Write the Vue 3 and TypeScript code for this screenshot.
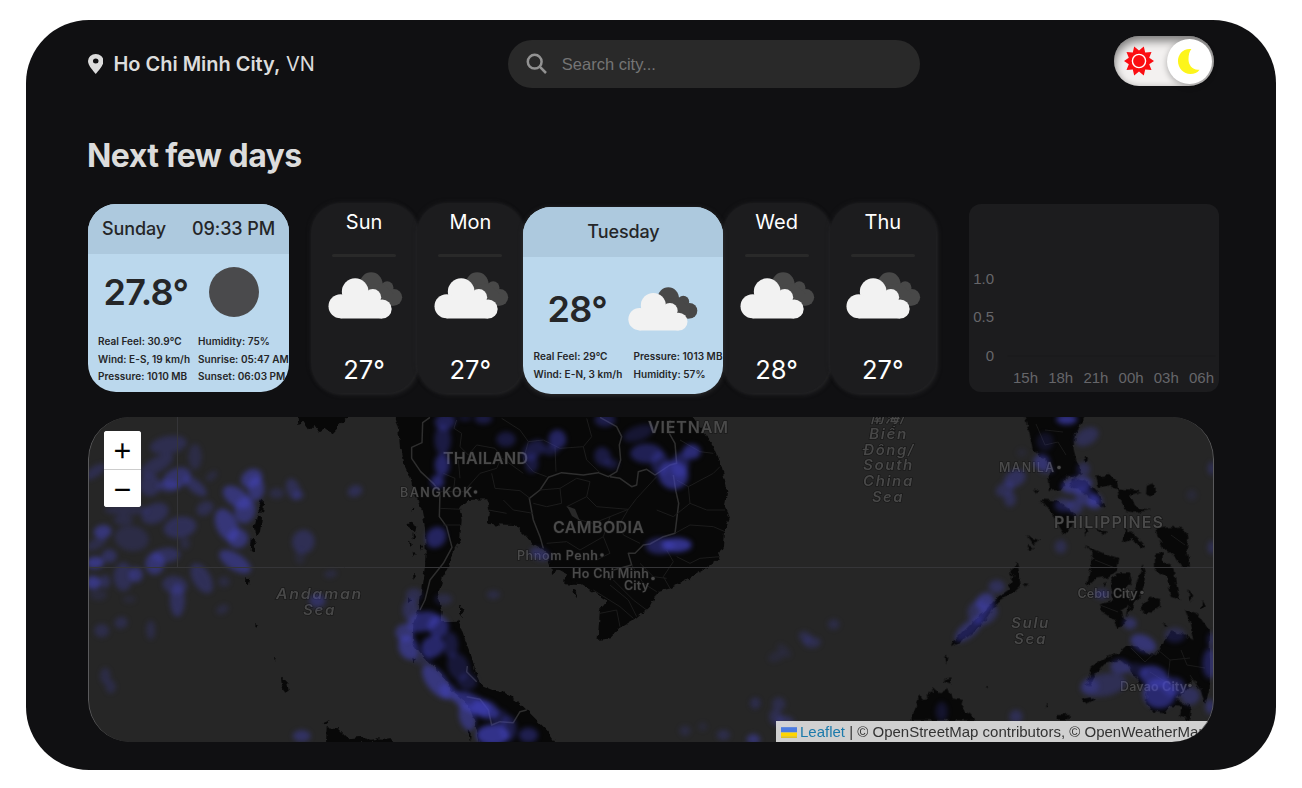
<script setup lang="ts">
interface Forecast {
  day: string
  temp: string
}
interface Blob {
  x: number
  y: number
  rx: number
  ry: number
  a: number
  o: number
}

const before: Forecast[] = [
  { day: 'Sun', temp: '27°' },
  { day: 'Mon', temp: '27°' },
]
const after: Forecast[] = [
  { day: 'Wed', temp: '28°' },
  { day: 'Thu', temp: '27°' },
]
const todayStats = ['Real Feel: 30.9°C', 'Humidity: 75%', 'Wind: E-S, 19 km/h', 'Sunrise: 05:47 AM', 'Pressure: 1010 MB', 'Sunset: 06:03 PM']
const tuesdayStats = ['Real Feel: 29°C', 'Pressure: 1013 MB', 'Wind: E-N, 3 km/h', 'Humidity: 57%']
const hours = ['15h', '18h', '21h', '00h', '03h', '06h']

const toBlobs = (rows: number[][]): Blob[] => rows.map(([x, y, rx, ry, a, o]) => ({ x, y, rx, ry, a, o }))

// Precipitation patches: x, y, radius x, radius y, rotation, strength
const westRain = toBlobs([
  [265, 105, 50, 24, -10, 0.45], [345, 140, 18, 34, 0, 0.35], [230, 165, 50, 20, -30, 0.45],
  [290, 205, 40, 26, -25, 0.75], [345, 228, 38, 16, 40, 0.6], [395, 198, 18, 10, -40, 0.3],
  [210, 225, 28, 30, 0, 0.5], [265, 228, 30, 16, 0, 0.6], [45, 185, 32, 14, -35, 0.45],
  [515, 205, 30, 24, -30, 0.9], [528, 235, 22, 32, 0, 0.85], [470, 262, 42, 24, 35, 0.9],
  [495, 300, 28, 36, 10, 0.8], [440, 345, 28, 46, -25, 0.9], [473, 385, 28, 26, 0, 0.85],
  [465, 455, 48, 22, 32, 0.85], [590, 250, 20, 14, 0, 0.35], [640, 238, 18, 30, -20, 0.5],
  [655, 255, 15, 12, 0, 0.45], [825, 243, 20, 15, -20, 0.5], [375, 295, 24, 18, -30, 0.45],
  [225, 310, 38, 26, -25, 0.5], [300, 352, 44, 28, -10, 0.55], [68, 365, 24, 18, -10, 0.9],
  [50, 400, 30, 14, -30, 0.4], [155, 385, 46, 34, 10, 0.35], [130, 330, 26, 14, 0, 0.35],
  [45, 458, 24, 16, -5, 1], [88, 438, 20, 18, 0, 0.6], [225, 460, 26, 30, 10, 0.8],
  [258, 436, 38, 20, -5, 0.6], [130, 500, 26, 38, 0, 0.5], [168, 494, 18, 20, 0, 0.8],
  [40, 518, 20, 18, 0, 1], [75, 515, 14, 18, 0, 0.5], [285, 525, 34, 24, 10, 0.5],
  [292, 570, 20, 45, 0, 0.6], [365, 505, 24, 44, -30, 0.55], [432, 515, 16, 14, 0, 0.3],
  [427, 598, 18, 12, -25, 0.3], [670, 395, 30, 32, 15, 0.5], [660, 440, 14, 20, 0, 0.2],
  [752, 492, 18, 10, -10, 0.3], [712, 572, 22, 18, 0, 0.65], [123, 638, 18, 16, -20, 0.4],
  [65, 662, 20, 18, 0, 0.4], [212, 660, 12, 26, 0, 0.35], [76, 798, 14, 22, 0, 0.35],
  [92, 830, 14, 18, 0, 0.35], [665, 978, 24, 16, 0, 0.65], [148, 568, 18, 10, 0, 0.2],
  [55, 555, 24, 14, 0, 0.25], [315, 400, 14, 16, 0, 0.3], [140, 300, 60, 14, 0, 0.35],
])
const mainlandRain = toBlobs([
  [195, 35, 28, 22, -10, 0.7], [188, 90, 22, 40, 0, 0.55], [186, 165, 20, 30, 0, 0.85],
  [172, 215, 18, 18, 0, 0.9], [310, 26, 24, 14, 0, 0.55], [255, 24, 18, 8, 0, 0.4],
  [378, 88, 26, 20, 0, 0.5], [460, 120, 34, 22, -40, 0.55], [455, 160, 18, 26, 0, 0.5],
  [532, 88, 24, 26, 0, 0.8], [510, 120, 22, 14, 0, 0.5], [675, 30, 28, 18, 0, 0.6],
  [668, 140, 22, 26, -20, 0.55], [695, 162, 18, 14, 0, 0.45], [775, 70, 42, 20, -20, 0.4],
  [800, 130, 44, 26, 0, 0.7], [840, 160, 24, 32, 0, 0.6], [880, 195, 40, 38, 20, 1],
  [900, 165, 24, 34, 10, 0.7], [935, 125, 24, 20, 0, 1], [168, 382, 30, 26, -50, 0.8],
  [840, 408, 38, 22, 0, 0.75], [890, 405, 40, 19, 0, 1.2], [480, 432, 28, 16, 20, 0.6],
  [102, 555, 22, 18, 0, 0.45], [92, 600, 22, 30, 0, 0.55], [190, 568, 24, 15, 0, 0.35],
  [340, 554, 18, 11, 0, 0.35], [130, 635, 44, 26, -15, 0.9], [175, 650, 28, 30, 0, 0.85],
  [75, 668, 26, 24, 0, 0.8], [85, 712, 26, 34, -20, 0.95], [158, 710, 32, 28, -30, 0.9],
  [128, 745, 28, 18, 0, 0.35], [212, 705, 20, 34, 0, 0.5], [235, 770, 28, 38, -20, 0.45],
  [262, 815, 26, 22, 0, 0.45], [170, 815, 26, 54, -38, 0.95], [205, 845, 26, 20, 30, 0.8],
  [275, 880, 56, 24, 25, 1], [315, 898, 38, 24, 20, 1], [262, 920, 22, 38, -15, 0.85],
  [338, 975, 44, 28, 0, 1.2], [385, 955, 22, 34, 0, 0.6], [445, 975, 26, 20, 0, 0.65],
  [360, 925, 22, 24, 0, 0.5], [915, 962, 15, 14, 0, 0.3], [968, 950, 12, 12, 0, 0.2],
  [1030, 975, 18, 14, 0, 0.4], [1120, 988, 18, 14, 0, 0.8], [1125, 880, 14, 16, 0, 0.3],
])
const centreRain = toBlobs([
  [195, 680, 18, 14, 20, 0.4], [215, 697, 24, 15, 0, 0.45], [281, 643, 16, 14, 0, 0.35],
  [108, 740, 22, 14, -20, 0.2], [132, 722, 24, 12, 45, 0.2], [116, 882, 18, 18, 0, 0.4],
  [108, 922, 18, 22, -20, 0.45], [135, 935, 24, 16, 0, 0.5], [48, 878, 14, 14, 0, 0.15],
])
const eastRain = toBlobs([
  [410, 28, 28, 14, 0, 1.1], [470, 80, 34, 22, -30, 0.5], [345, 95, 22, 24, 0, 0.3],
  [335, 155, 22, 20, 0, 0.8], [275, 128, 14, 12, 0, 0.15], [350, 180, 20, 10, 0, 0.5],
  [255, 205, 30, 22, -25, 0.6], [225, 238, 26, 18, -25, 0.5], [240, 268, 16, 20, 0, 0.5],
  [460, 178, 18, 18, 0, 0.5], [440, 225, 42, 22, -10, 0.9], [470, 262, 34, 22, 30, 0.7],
  [495, 275, 20, 20, 0, 0.75], [435, 290, 20, 20, 0, 0.65], [400, 285, 24, 18, 0, 0.6],
  [392, 410, 16, 18, 0, 0.45], [200, 530, 22, 18, 0, 0.55], [165, 575, 26, 22, -30, 0.9],
  [142, 605, 26, 30, 20, 0.55], [170, 615, 34, 22, -40, 0.6], [115, 660, 44, 20, -40, 0.7],
  [600, 640, 18, 16, 0, 0.65], [640, 700, 36, 22, 25, 0.85], [735, 675, 28, 20, 0, 0.45],
  [570, 770, 26, 20, 0, 0.7], [620, 780, 30, 18, 10, 0.4], [672, 800, 40, 28, 20, 0.95],
  [688, 850, 44, 40, 0, 0.95], [520, 825, 62, 30, -10, 0.5], [480, 828, 24, 20, 0, 0.5],
  [730, 830, 30, 26, 0, 0.7], [780, 858, 26, 24, 0, 0.6], [840, 760, 20, 40, 0, 0.7],
  [845, 690, 12, 20, 0, 0.5], [840, 890, 12, 20, 0, 0.7], [845, 175, 10, 18, 0, 0.5],
  [845, 412, 10, 18, 0, 0.5], [785, 255, 14, 14, 0, 0.2], [258, 920, 18, 18, 0, 0.5],
  [35, 905, 16, 26, 0, 0.35], [515, 552, 20, 12, 0, 0.6],
])
const layers = [
  { id: 'w', t: 'translate(80 410) scale(.33333)', blobs: westRain },
  { id: 'm', t: 'translate(380 410) scale(.33333)', blobs: mainlandRain },
  { id: 'c', t: 'translate(740 410) scale(.33333)', blobs: centreRain },
  { id: 'e', t: 'translate(930 410) scale(.33333)', blobs: eastRain },
]
</script>

<template>
  <svg class="defs" aria-hidden="true">
    <symbol id="clouds" viewBox="84 229 224 141">
      <g class="back-cloud">
        <circle cx="213" cy="264" r="34" />
        <circle cx="261" cy="276" r="19" />
        <circle cx="281" cy="305" r="25" />
        <path d="M200 270L245 262L280 295V330H250L200 300Z" />
      </g>
      <g class="front-cloud">
        <circle cx="165" cy="288" r="40" />
        <circle cx="121" cy="332" r="36" />
        <circle cx="218" cy="305" r="25" />
        <circle cx="246" cy="340" r="28.5" />
        <path d="M121 300H200L246 318V368.5H121Z" />
      </g>
    </symbol>
  </svg>
  <main class="shell">
    <header class="top">
      <div class="place">
        <svg class="pin" viewBox="0 0 14 20" preserveAspectRatio="none"><path fill-rule="evenodd" d="M7 0A7 7 0 0 0 0 7C0 11.6 4.600 16.500 7 20C9.400 16.500 14 11.600 14 7A7 7 0 0 0 7 0ZM7 4.600A2.500 2.500 0 1 1 7 9.600A2.500 2.500 0 0 1 7 4.600Z" /></svg>
        <span><b>Ho Chi Minh City,</b> VN</span>
      </div>
      <label class="search">
        <svg viewBox="0 0 22 22"><circle cx="8.700" cy="8.700" r="6.900" /><path d="M13.700 13.700L20 20" /></svg>
        <input type="text" placeholder="Search city..." />
      </label>
      <div class="toggle">
        <svg class="sun" viewBox="-1 0 32 30">
          <path d="M15 4.500L19.800 .5L21.200 6.400L27.500 5.900L25.200 11.700L30 15L25.200 18.300L27.500 24.100L21.200 23.600L19.800 29.500L15 25.500L10.200 29.500L8.800 23.600L2.500 24.100L4.800 18.300L0 15L4.800 11.700L2.500 5.900L8.800 6.400L10.200 .5Z" fill="#fb0d12" />
          <circle cx="15" cy="15" r="6.600" fill="#fb0d12" stroke="#fff" stroke-width="1.400" />
        </svg>
        <div class="knob">
          <svg viewBox="0 0 24 28"><path d="M15 1C6 0 1 7 1 13.500C1 21 7 27 14 27C18 27 21.500 25.500 23.500 22.500C16 23.500 12 17.500 12 12C12 7 13 3.500 15 1Z" fill="#fdf51b" /></svg>
        </div>
      </div>
    </header>

    <h1>Next few days</h1>

    <section class="row">
      <article class="wide today">
        <div class="head"><span>Sunday</span><span>09:33 PM</span></div>
        <div class="now"><strong>27.8°</strong><i class="moon"></i></div>
        <div class="stats"><span v-for="s in todayStats" :key="s">{{ s }}</span></div>
      </article>

      <div class="days">
        <article v-for="d in before" :key="d.day" class="day">
          <h2>{{ d.day }}</h2><hr />
          <svg><use href="#clouds" /></svg>
          <p>{{ d.temp }}</p>
        </article>
        <article class="wide selected">
          <div class="head"><span>Tuesday</span></div>
          <div class="now"><strong>28°</strong><svg><use href="#clouds" /></svg></div>
          <div class="stats"><span v-for="s in tuesdayStats" :key="s">{{ s }}</span></div>
        </article>
        <article v-for="d in after" :key="d.day" class="day">
          <h2>{{ d.day }}</h2><hr />
          <svg><use href="#clouds" /></svg>
          <p>{{ d.temp }}</p>
        </article>
      </div>

      <svg class="chart" viewBox="0 0 249 188">
        <text x="24.500" y="80" text-anchor="end">1.0</text>
        <text x="24.500" y="118" text-anchor="end">0.5</text>
        <text x="24.500" y="157" text-anchor="end">0</text>
        <path d="M38 152H246" />
        <text v-for="(h, i) in hours" :key="h" :x="56 + i * 35.2" y="179" text-anchor="middle">{{ h }}</text>
      </svg>
    </section>

    <section class="map">
      <svg class="canvas" viewBox="88 417 1126 325">
        <defs>
          <filter id="soft" x="-5%" y="-5%" width="110%" height="110%" color-interpolation-filters="sRGB"><feGaussianBlur stdDeviation="8" /></filter>
          <filter id="coast" x="0" y="0" width="100%" height="100%" color-interpolation-filters="sRGB">
            <feTurbulence type="fractalNoise" baseFrequency=".16" numOctaves="2" seed="4" />
            <feDisplacementMap in="SourceGraphic" scale="6" xChannelSelector="R" yChannelSelector="G" />
          </filter>
        </defs>
        <g class="land" filter="url(#coast)">
          <g transform="translate(80 410) scale(.33333)">
            <path d="M652 10H815L785 38L755 70L735 55L715 66L700 45L685 60L670 38L655 45Z" />
            <path d="M542 265L552 275L550 305L540 310L536 290ZM532 315L546 325L540 365L530 380L524 350ZM516 385L528 400L522 425L512 420ZM499 498L511 503L507 525L498 522Z" />
            <path d="M603 800L622 820L626 842L615 848L605 825ZM525 642L535 648L528 653ZM580 742L588 750L580 752ZM740 952L775 955L805 985L850 980L870 992L930 985L940 1000H738ZM728 940L752 930L740 945Z" />
          </g>
          <g transform="translate(380 410) scale(.33333)">
            <path d="M40 10L55 60L60 110L70 160L90 200L105 250L125 300L135 350L137 420L135 470L125 530L118 590L100 640L98 700L120 730L150 760L180 790L215 840L250 870L272 900L282 930L300 1000H528L500 960L450 910L420 880L370 845L340 842L310 830L290 800L275 740L255 690L235 632L182 634L188 605L172 560L190 500L207 470L217 430L240 390L245 330L238 292L262 270L322 268L327 300L323 342L400 345L430 370L455 398L492 420L510 465L513 495L535 478L558 490L552 520L602 522L640 545L682 572L660 600L653 690L690 685L720 655L770 625L810 590L832 545L872 535L920 510L970 480L1010 450L1032 410L1035 360L1050 320L1035 290L1042 240L1022 160L1002 110L960 50L930 10Z" />
            <path d="M78 345L92 338L112 350L108 370L95 358ZM98 370L108 378L98 390ZM84 395L96 402L88 410ZM98 425L110 430L100 440ZM125 405L132 412L125 425ZM92 290L102 295L95 305ZM100 490L108 498L100 510ZM88 562L96 572L86 580ZM240 588L253 595L247 622L240 610ZM578 538L592 545L586 565ZM575 508L592 515L575 522ZM100 740L110 745L104 762ZM262 955L272 970L270 990ZM-10 985L35 988V1000H-10Z" />
          </g>
          <g transform="translate(930 410) scale(.33333)">
            <path d="M282 10H470L450 45L435 70L430 115L440 155L455 190L440 205L415 195L400 215L385 225L355 210L365 170L335 140L308 120L300 75Z" />
            <path d="M355 195L390 195L410 230L395 235L360 240ZM430 205L470 215L500 245L525 285L515 292L485 265L450 240L420 235ZM495 200L540 195L560 215L565 240L535 225L505 235ZM560 235L610 240L635 245L600 255L615 290L660 300L610 308L585 300L570 265ZM650 225L665 218L680 240L665 262L648 255ZM330 268L380 272L415 292L435 318L425 350L405 375L388 350L370 310L345 290ZM458 135L475 150L462 158ZM308 235L328 243L320 250Z" />
            <path d="M465 350L475 362L468 380ZM500 358L530 365L520 378ZM590 355L625 385L648 410L630 410L605 385L572 398ZM675 355L750 350L775 380L770 430L780 470L755 470L735 440L700 415ZM675 430L700 430L695 450L730 475L738 520L750 570L725 560L710 500L675 480Z" />
            <path d="M465 405L520 430L568 445L560 480L535 500L500 505L470 530L480 480L488 430ZM540 515L560 490L600 490L605 515L585 545L605 580L575 600L585 640L565 655L545 625L515 605L510 580L550 570ZM638 465L648 500L635 550L605 595L590 620L605 560ZM632 590L660 560L690 568L690 590L665 608L635 605Z" />
            <path d="M775 540L790 560L780 575ZM815 570L828 590L815 595ZM765 598L800 610L820 640L840 655V830L825 885L812 840L785 805L770 840L735 865L760 875L785 900L780 930L750 920L755 890L720 888L705 910L670 905L648 880L650 840L620 805L600 775L570 750L520 762L498 790L480 830L468 825L485 770L520 745L565 730L590 705L625 710L650 730L680 735L700 700L720 665L755 670L790 690L780 640Z" />
            <path d="M260 455L268 490L272 525L245 550L205 575L175 620L140 660L100 690L65 712L75 690L125 640L165 600L205 560L235 540L250 500L240 490ZM285 522L300 525L285 532ZM290 375L328 392L308 400ZM292 405L308 412L300 425ZM43 740L52 738L48 760ZM50 808L65 805L60 820L40 815ZM-55 920L-30 855L-20 875L10 835L30 850L55 835L65 865L100 870L95 900L120 912L138 930H-55ZM380 915L420 915L415 928H380ZM455 865L480 858L495 870L475 882ZM348 885L353 890L345 895ZM168 828L178 830L170 834ZM700 640L715 648L705 650ZM530 515L525 528L518 525Z" />
          </g>
        </g>
        <g class="borders" transform="translate(380 410) scale(.33333)">
          <path class="major" d="M150 22L128 38L126 98L95 112V145L122 185L160 220L180 245L178 320L200 350L216 412L190 460L150 510L135 570L120 600" />
          <path class="major" d="M660 22L710 50L725 80L718 105L722 150L710 185L685 200L655 188L610 195L545 188L505 202L480 240L448 265L460 330L480 380L490 415" />
          <path class="major" d="M690 200L720 205L755 230L770 225L775 185L800 178L825 195L870 165L890 160L885 100L868 70L870 30" />
          <path class="major" d="M880 195L888 245L896 280L885 370L850 380L810 402L790 405L765 430L745 430L755 465L700 480L690 510" />
          <path class="major" d="M260 860L300 868L325 900L335 945L360 935L400 938L420 905L440 900M262 768L260 785L290 815" />
          <path d="M230 30L222 55L245 70L240 110L265 135L290 105L345 115L365 140L350 175L300 190L260 235M365 25L420 60L445 95L490 90L540 115L610 110L635 80L620 25M445 95L430 150L460 185L500 200M525 110L528 185M610 110L620 150L660 188M360 140L430 190M190 190L225 205L220 245M180 245H260M240 205L235 150M335 190L345 235L420 242L450 265M370 270L400 300L460 310M325 300L380 310M180 295L245 298M190 345L240 345" />
          <path d="M480 240L540 235L590 205L630 215L620 260L650 290L745 298L770 265L830 200M540 235L545 280L500 290L460 280M620 260L560 290L600 330L640 340L690 320L745 298L720 340L730 375L780 400M690 320L670 380L600 420L560 395L500 400M670 380L690 430L650 450M830 300L880 320L930 280L980 300L1035 300M885 370L930 345L1000 350L1035 365M930 280L925 230L890 210M925 230L1000 190L1020 170M900 90L960 125L1000 130M890 440L930 460L960 445L1020 440M860 420L880 455L850 500L870 535M755 465L790 520L830 545M700 510L760 570L800 600M690 525L745 570L770 620M640 540L720 590L760 625M660 610L710 600L720 650M780 460L820 500L860 505" />
        </g>
        <path class="lake" d="M567 506L575 509L580 521L572 516Z" />
        <g class="borders east"><path d="M1036 424L1045 445L1058 442L1066 455M1045 430L1063 432M1131 648L1145 662L1158 650L1170 660L1168 678M1181 650L1187 665L1205 668M1170 660L1190 658M1150 672L1178 690M1190 675L1200 690M1095 560L1115 568M1100 605L1118 612M1171 535L1185 545" /></g>

        <g class="names countries">
          <text x="443" y="463.500" textLength="85">THAILAND</text>
          <text x="553" y="533" textLength="91">CAMBODIA</text>
          <text x="648" y="433" textLength="80">VIETNAM</text>
          <text x="1054" y="527.500" textLength="109">PHILIPPINES</text>
        </g>
        <g class="names cities">
          <text x="400" y="497" textLength="72">BANGKOK</text><circle cx="475.500" cy="492" r="1.800" />
          <text x="517" y="560" textLength="81">Phnom Penh</text><circle cx="602" cy="555" r="1.800" />
          <text x="572" y="577.500" textLength="77">Ho Chi Minh</text><circle cx="653" cy="578.500" r="1.800" />
          <text x="624" y="590" textLength="25">City</text>
          <text x="999" y="471.500" textLength="55">MANILA</text><circle cx="1059" cy="467.500" r="1.800" />
          <text x="1077.500" y="597.500" textLength="60">Cebu City</text><circle cx="1142" cy="592.500" r="1.800" />
          <text x="1120" y="690.500" textLength="67">Davao City</text><circle cx="1190" cy="685.500" r="1.800" />
        </g>
        <g class="names seas">
          <text x="276" y="599" textLength="87" lengthAdjust="spacingAndGlyphs">Andaman</text><text x="303" y="614.500" textLength="33" lengthAdjust="spacingAndGlyphs">Sea</text>
          <text x="870" y="422.500" textLength="37">南海/</text><text x="869" y="438.500" textLength="39" lengthAdjust="spacingAndGlyphs">Biển</text>
          <text x="863" y="454.500" textLength="52" lengthAdjust="spacingAndGlyphs">Đông/</text><text x="863" y="470" textLength="51" lengthAdjust="spacingAndGlyphs">South</text>
          <text x="863" y="486" textLength="51" lengthAdjust="spacingAndGlyphs">China</text><text x="872" y="501.500" textLength="32" lengthAdjust="spacingAndGlyphs">Sea</text>
          <text x="1011" y="628" textLength="39" lengthAdjust="spacingAndGlyphs">Sulu</text><text x="1014" y="643.500" textLength="33" lengthAdjust="spacingAndGlyphs">Sea</text>
        </g>
        <g v-for="l in layers" :key="l.id" :transform="l.t" class="rain" filter="url(#soft)">
          <ellipse v-for="(b, i) in l.blobs" :key="i" :cx="b.x" :cy="b.y" :rx="b.rx * 1.12" :ry="b.ry * 1.12" :opacity="b.o * 0.58" :transform="`rotate(${b.a} ${b.x} ${b.y})`" />
        </g>
        <path class="seam" d="M88 567.500H1214M177.500 417V567" />
      </svg>
      <div class="zoom"><button>+</button><button>−</button></div>
      <div class="credit"><svg viewBox="0 0 12 8"><path fill="#4C7BE1" d="M0 0h12v4H0z" /><path fill="#FFD500" d="M0 4h12v3H0z" /><path fill="#E0BC00" d="M0 7h12v1H0z" /></svg><a>Leaflet</a> | © OpenStreetMap contributors, © OpenWeatherMap</div>
    </section>
  </main>
</template>

<style>
body { margin: 0; background: #fff; overflow: hidden; }
</style>

<style scoped>
* { box-sizing: border-box; }
.defs { position: absolute; width: 0; height: 0; }
.shell {
  width: 1250px; height: 750px; margin: 20px 0 0 26.400px; padding: 16px 61px 0 61.600px;
  border-radius: 63px; background: #101012; color: #dcdcdc;
  font-family: Inter, "Liberation Sans", sans-serif; overflow: hidden;
}
.top { display: flex; align-items: flex-start; height: 86px; }
.place { flex: none; display: flex; align-items: center; gap: 10px; width: 419.800px; height: 56px; font-size: 20px; letter-spacing: -.03px; white-space: nowrap; }
.place b { font-weight: 600; }
.pin { width: 15.500px; height: 20px; fill: #dcdcdc; margin-top: -1px; }
.search { flex: none; display: flex; align-items: center; gap: 14px; width: 412.500px; height: 48px; margin-top: 4px; padding-left: 18px; border-radius: 24px; background: #292929; }
.search svg { width: 22px; height: 22px; fill: none; stroke: #929292; stroke-width: 2.500; }
.search input { width: 300px; padding: 0; border: 0; outline: 0; background: none; color: #aaa; font: 16.500px/20px "Liberation Sans", Arial, sans-serif; }
.search input::placeholder { color: #757575; opacity: 1; }
.toggle { flex: none; display: flex; align-items: center; justify-content: space-between; width: 100px; height: 50px; margin-left: 193.300px; padding: 0 2px 0 9px; border-radius: 25px; background: #f3f1f0; box-shadow: inset 0 5px 10px rgba(0, 0, 0, .5), inset 0 -2px 4px rgba(0, 0, 0, .05); }
.sun { width: 32px; height: 30px; }
.knob { display: flex; align-items: center; justify-content: center; width: 45px; height: 45px; padding-right: 2px; border-radius: 50%; background: #fff; box-shadow: 0 2px 6px rgba(0, 0, 0, .3); }
.knob svg { width: 23px; height: 27px; }
h1 { height: 82px; margin: 0 0 0 -1px; padding-top: 15px; color: #dcdcdc; font-size: 32px; line-height: 38px; font-weight: 700; letter-spacing: -.56px; }
.row { display: flex; height: 213px; }

.wide { flex: none; width: 200px; border-radius: 28px; overflow: hidden; background: #bbd8ed; color: #252628; }
.head { display: flex; align-items: center; height: 50px; padding-bottom: 1px; background: #adc9de; font-size: 18px; font-weight: 500; letter-spacing: -.1px; white-space: nowrap; }
.wide strong { font-size: 36px; font-weight: 600; letter-spacing: -.7px; }
.stats { display: grid; grid-template-columns: 100px 110px; padding-left: 10px; font-size: 10px; font-weight: 600; line-height: 17.500px; letter-spacing: .04px; white-space: nowrap; }
.now { display: flex; align-items: center; }
.today { width: 201px; height: 188px; }
.today .head { justify-content: space-between; padding: 0 14px 1px; }
.today .now { height: 79px; gap: 20.500px; padding: 0 0 3px 15.500px; }
.moon { width: 50px; height: 50px; border-radius: 50%; background: #4a4a4c; }

.days { flex: none; display: flex; width: 626px; margin-left: 22px; }
.day { flex: none; display: flex; flex-direction: column; align-items: center; width: 106.250px; height: 190px; margin-top: -1px; border-radius: 30px; background: #1c1c1e; box-shadow: 2px 2px 4px rgba(54, 54, 56, .5), -1px -1px 4px rgba(40, 40, 42, .4); color: #fff; }
.day h2 { height: 51px; margin: 0; padding-top: 7px; font-size: 20px; font-weight: 400; line-height: 24px; }
.day hr { width: 64px; height: 3px; margin: 0; border: 0; border-radius: 2px; background: #292929; }
.day svg { width: 75px; height: 47px; margin: 14.500px 0 0 2px; }
.day p { margin: 36.500px 0 0; font-size: 25.500px; font-weight: 400; line-height: 30px; }
.selected { position: relative; height: 187px; margin-top: 3px; box-shadow: 0 1px 5px #303032; }
.selected .head { justify-content: center; }
.selected .now { height: 91px; padding: 13px 0 0 24px; gap: 20.500px; }
.selected .now svg { width: 70px; height: 44px; }
.back-cloud { fill: #484848; }
.front-cloud { fill: #f2f2f2; }

.chart { flex: none; width: 250px; height: 188px; margin-left: 32.500px; border-radius: 12px; background: #1c1c1e; font: 15px "Liberation Sans", Arial, sans-serif; }
.chart text { fill: #66666a; }
.chart path { stroke: #18181b; }

.map { position: relative; width: 1126px; height: 325px; border-radius: 42px; overflow: hidden; background: #262626; }
.map::after { content: ""; position: absolute; inset: 0; border: solid #5a5a5c; border-width: 0 1px; border-radius: 42px; pointer-events: none; }
.canvas { display: block; width: 1126px; height: 325px; }
.land { fill: #080808; }
.borders { fill: none; stroke: #1c1c1c; stroke-width: 3; stroke-linejoin: round; }
.borders .major { stroke: #2f2f2f; stroke-width: 4.500; }
.east { stroke-width: 1; stroke: #1a1a1a; }
.lake { fill: #282828; }
.rain { fill: #4545c4; }
.seam { fill: none; stroke: #353538; stroke-width: 1; }
.names { fill: #4a4a4a; font-family: Inter, sans-serif; font-weight: 600; paint-order: stroke; stroke: #151515; stroke-width: 1.200px; }
.countries { font-size: 16px; }
.cities { font-size: 12.500px; }
.seas { fill: #484848; font-size: 14px; font-weight: 600; font-style: italic; letter-spacing: 1.500px; font-family: Inter, "Noto Sans CJK SC", sans-serif; }
.zoom { position: absolute; left: 16px; top: 14px; width: 37px; height: 76px; border-radius: 3px; overflow: hidden; background: #fff; }
.zoom button { display: block; width: 37px; height: 38px; padding: 0; border: 0; background: #fff; color: #000; font: 23px/34px "DejaVu Sans", sans-serif; -webkit-text-stroke: .3px #000; }
.zoom button:first-child { height: 39px; border-bottom: 1px solid #ccc; }
.credit { position: absolute; left: 688px; bottom: 0; width: 438px; height: 21px; padding-left: 5px; overflow: hidden; background: rgba(232, 232, 232, .88); color: #333; font: 15px/21px "Liberation Sans", Arial, sans-serif; white-space: nowrap; }
.credit svg { width: 16px; height: 11px; margin-right: 3px; vertical-align: -1px; }
.credit a { color: #1b7aab; }
</style>
